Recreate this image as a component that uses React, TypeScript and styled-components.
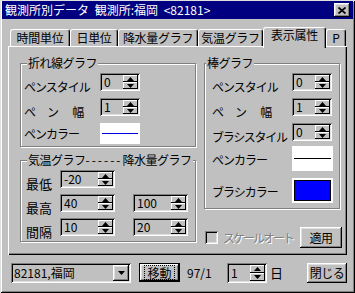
import React from "react";
import styled, { createGlobalStyle, css } from "styled-components";

const GlobalStyle = createGlobalStyle`
  html, body { margin: 0; padding: 0; background: #c0c0c0; }
  body {
    font-family: "Noto Sans CJK JP", "Noto Sans", sans-serif;
    font-size: 12px;
    color: #000;
  }
  * { box-sizing: border-box; }
`;

const raised = css`
  background: #c0c0c0;
  box-shadow: inset -1px -1px 0 #000, inset 1px 1px 0 #fff,
    inset -2px -2px 0 #808080, inset 2px 2px 0 #dfdfdf;
`;

const sunken = css`
  box-shadow: inset 1px 1px 0 #808080, inset -1px -1px 0 #fff,
    inset 2px 2px 0 #000, inset -2px -2px 0 #dfdfdf;
`;

const Window = styled.div`
  width: 355px;
  height: 293px;
  display: flex;
  flex-direction: column;
  padding: 1px 2px 2px;
  background: #c0c0c0;
  box-shadow: inset 1px 1px 0 #dfdfdf, inset -1px -1px 0 #000,
    inset 2px 2px 0 #fff, inset -2px -2px 0 #808080;
`;

const TitleBar = styled.div`
  height: 18px;
  flex: none;
  background: #000080;
  color: #fff;
  display: flex;
  align-items: center;
  justify-content: space-between;
  padding: 0 3px;
  line-height: 14px;
  white-space: pre;
  word-spacing: 3px;
`;

const CloseButton = styled.div`
  width: 16px;
  height: 14px;
  display: flex;
  align-items: center;
  justify-content: center;
  ${raised}
`;

const Client = styled.div`
  flex: 1;
  display: flex;
  flex-direction: column;
  padding: 8px 6px 0;
`;

const TabStrip = styled.div`
  height: 19px;
  display: flex;
  align-items: flex-end;
  padding-left: 2px;
`;

const Tab = styled.div<{ $w: number; $active?: boolean }>`
  width: ${(p) => p.$w}px;
  height: ${(p) => (p.$active ? 21 : 17)}px;
  margin-bottom: ${(p) => (p.$active ? -2 : 0)}px;
  position: relative;
  z-index: ${(p) => (p.$active ? 1 : 0)};
  background: #c0c0c0;
  border-top: 1px solid #fff;
  border-left: 1px solid #fff;
  border-right: 1px solid #000;
  border-radius: 3px 3px 0 0;
  box-shadow: inset -1px 0 0 #808080;
  display: flex;
  justify-content: center;
  padding-top: ${(p) => (p.$active ? 0 : 1)}px;
  line-height: 14px;
  white-space: nowrap;
  letter-spacing: -0.3px;
`;

const Panel = styled.div`
  height: 209px;
  flex: none;
  display: flex;
  gap: 8px;
  padding: 10px 5px 0 12px;
  box-shadow: inset 1px 1px 0 #fff, inset -1px -1px 0 #000,
    inset -2px -2px 0 #808080;
`;

const Column = styled.div<{ $w: number }>`
  width: ${(p) => p.$w}px;
  display: flex;
  flex-direction: column;
`;

const Group = styled.div<{ $w: number; $h: number; $mt: number }>`
  width: ${(p) => p.$w}px;
  height: ${(p) => p.$h}px;
  margin-top: ${(p) => p.$mt}px;
  border: 1px solid #808080;
  box-shadow: inset 1px 1px 0 #fff, 1px 1px 0 #fff;
  display: flex;
  flex-direction: column;
`;

const Legend = styled.div<{ $x: number }>`
  align-self: flex-start;
  height: 14px;
  line-height: 14px;
  margin: -8px 0 0 ${(p) => p.$x}px;
  padding: 0 1px;
  background: #c0c0c0;
  white-space: nowrap;
  letter-spacing: -0.5px;
`;

const Dashes = styled.span`
  letter-spacing: 2px;
`;

const Rows = styled.div<{ $pl: number }>`
  display: flex;
  flex-direction: column;
  padding: 3px 0 0 ${(p) => p.$pl}px;
`;

const Row = styled.div<{ $h?: number; $mt?: number }>`
  display: flex;
  align-items: center;
  height: ${(p) => p.$h ?? 18}px;
  margin-top: ${(p) => p.$mt ?? 0}px;
`;

const Label = styled.span<{ $w: number; $drop?: number; $size?: number; $ls?: number }>`
  width: ${(p) => p.$w}px;
  flex: none;
  font-size: ${(p) => p.$size ?? 12}px;
  line-height: 14px;
  margin-top: ${(p) => (p.$drop ?? 0) * 2}px;
  white-space: pre;
  letter-spacing: ${(p) => p.$ls ?? -1}px;
`;

const Spin = styled.div<{ $w: number; $h?: number; $ml?: number }>`
  width: ${(p) => p.$w}px;
  height: ${(p) => p.$h ?? 18}px;
  margin-left: ${(p) => p.$ml ?? 0}px;
  flex: none;
  display: flex;
  padding: 2px;
  background: #c0c0c0;
  ${sunken}
`;

const SpinValue = styled.span`
  flex: 1;
  padding-left: 2px;
  line-height: 14px;
  align-self: center;
`;

const SpinButtons = styled.div`
  width: 15px;
  display: flex;
  flex-direction: column;
`;

const SpinHalf = styled.div`
  flex: 1;
  display: flex;
  align-items: center;
  justify-content: center;
  background: #c0c0c0;
  box-shadow: inset -1px -1px 0 #000, inset 1px 1px 0 #fff;
`;

const Swatch = styled.div<{ $w: number; $h: number }>`
  width: ${(p) => p.$w}px;
  height: ${(p) => p.$h}px;
  flex: none;
  background: #fff;
  display: flex;
  align-items: center;
  padding: 0 2px;
`;

const SwatchLine = styled.div<{ $color: string }>`
  flex: 1;
  height: 1px;
  background: ${(p) => p.$color};
`;

const BrushSwatch = styled.div`
  width: 41px;
  height: 25px;
  flex: none;
  background: #fff;
  padding: 2px;
  display: flex;
`;

const BrushFill = styled.div`
  flex: 1;
  border: 1px solid #000;
  background: #0000ff;
`;

const CheckRow = styled.div`
  display: flex;
  align-items: center;
  height: 21px;
  margin-top: 18px;
`;

const CheckBox = styled.div`
  width: 13px;
  height: 13px;
  margin-left: 1px;
  background: #c0c0c0;
  ${sunken}
`;

const DisabledText = styled.span`
  margin-left: 5px;
  color: #808080;
  text-shadow: 1px 1px 0 #fff;
  letter-spacing: -2px;
  line-height: 14px;
  white-space: nowrap;
`;

const Button = styled.div<{ $w: number; $h: number; $ml?: string }>`
  width: ${(p) => p.$w}px;
  height: ${(p) => p.$h}px;
  margin-left: ${(p) => p.$ml ?? "0"};
  flex: none;
  display: flex;
  align-items: center;
  justify-content: center;
  line-height: 14px;
  letter-spacing: -0.5px;
  ${raised}
`;

const DefaultButton = styled.div`
  width: 41px;
  height: 19px;
  margin-left: 8px;
  flex: none;
  border: 1px solid #000;
  display: flex;
  align-items: center;
  justify-content: center;
  ${raised}
`;

const Focus = styled.span`
  outline: 1px dotted #000;
  outline-offset: 0;
  padding: 0 2px;
  line-height: 13px;
`;

const BottomRow = styled.div`
  display: flex;
  align-items: center;
  height: 21px;
  margin-top: 7px;
  padding-left: 3px;
`;

const Combo = styled.div`
  width: 120px;
  height: 20px;
  flex: none;
  display: flex;
  padding: 2px;
  background: #c0c0c0;
  ${sunken}
`;

const ComboText = styled.span`
  flex: 1;
  padding-left: 1px;
  line-height: 16px;
`;

const ComboButton = styled.div`
  width: 16px;
  display: flex;
  align-items: center;
  justify-content: center;
  ${raised}
`;

const Plain = styled.span<{ $w?: number; $ml?: number; $size?: number }>`
  width: ${(p) => (p.$w ? `${p.$w}px` : "auto")};
  margin-left: ${(p) => p.$ml ?? 0}px;
  font-size: ${(p) => p.$size ?? 12}px;
  line-height: 14px;
  flex: none;
`;

const Arrow = ({ up }: { up?: boolean }) => (
  <svg width="7" height="4" viewBox="0 0 7 4">
    <polygon points={up ? "0,4 7,4 3.5,0" : "0,0 7,0 3.5,4"} fill="#000" />
  </svg>
);

const SpinField = ({
  value,
  w,
  h,
  ml,
}: {
  value: string;
  w: number;
  h?: number;
  ml?: number;
}) => (
  <Spin $w={w} $h={h} $ml={ml}>
    <SpinValue>{value}</SpinValue>
    <SpinButtons>
      <SpinHalf>
        <Arrow up />
      </SpinHalf>
      <SpinHalf>
        <Arrow />
      </SpinHalf>
    </SpinButtons>
  </Spin>
);

const tabs = [
  { label: "時間単位", w: 60 },
  { label: "日単位", w: 48 },
  { label: "降水量グラフ", w: 80 },
  { label: "気温グラフ", w: 65 },
  { label: "表示属性", w: 63, active: true },
  { label: "P", w: 20 },
];

export default function App() {
  return (
    <>
      <GlobalStyle />
      <Window>
        <TitleBar>
          <span>観測所別データ 観測所:福岡 &lt;82181&gt;</span>
          <CloseButton>
            <svg width="8" height="7" viewBox="0 0 8 7">
              <path d="M0.5 0.5L7.5 6.5M7.5 0.5L0.5 6.5" stroke="#000" strokeWidth="1.7" />
            </svg>
          </CloseButton>
        </TitleBar>
        <Client>
          <TabStrip>
            {tabs.map((t) => (
              <Tab key={t.label} $w={t.w} $active={t.active}>
                {t.label}
              </Tab>
            ))}
          </TabStrip>
          <Panel>
            <Column $w={176}>
              <Group $w={176} $h={84} $mt={7}>
                <Legend $x={6}>折れ線グラフ</Legend>
                <Rows $pl={3}>
                  <Row>
                    <Label $w={76} $drop={5}>ペンスタイル</Label>
                    <SpinField value="0" w={40} />
                  </Row>
                  <Row $mt={7}>
                    <Label $w={76} $drop={5} $ls={-0.5}>ペ　ン　 幅</Label>
                    <SpinField value="1" w={40} />
                  </Row>
                  <Row $h={21} $mt={7}>
                    <Label $w={76}>ペンカラー</Label>
                    <Swatch $w={40} $h={21}>
                      <SwatchLine $color="#0000e0" />
                    </Swatch>
                  </Row>
                </Rows>
              </Group>
              <Group $w={176} $h={82} $mt={13}>
                <Legend $x={6}>
                  気温グラフ<Dashes>------</Dashes>降水量グラフ
                </Legend>
                <Rows $pl={5}>
                  <Row>
                    <Label $w={34} $drop={5} $size={13} $ls={0}>最低</Label>
                    <SpinField value="-20" w={55} />
                  </Row>
                  <Row $mt={6}>
                    <Label $w={34} $drop={5} $size={13} $ls={0}>最高</Label>
                    <SpinField value="40" w={55} />
                    <SpinField value="100" w={55} ml={18} />
                  </Row>
                  <Row $mt={6}>
                    <Label $w={34} $drop={5} $size={13} $ls={0}>間隔</Label>
                    <SpinField value="10" w={55} />
                    <SpinField value="20" w={55} ml={18} />
                  </Row>
                </Rows>
              </Group>
            </Column>
            <Column $w={138}>
              <Group $w={136} $h={146} $mt={7}>
                <Legend $x={1}>棒グラフ</Legend>
                <Rows $pl={7}>
                  <Row>
                    <Label $w={80} $drop={5}>ペンスタイル</Label>
                    <SpinField value="0" w={40} />
                  </Row>
                  <Row $mt={7}>
                    <Label $w={80} $drop={5} $ls={-0.5}>ペ　ン　 幅</Label>
                    <SpinField value="1" w={40} />
                  </Row>
                  <Row $mt={7}>
                    <Label $w={80} $drop={5} $ls={-1.3}>ブラシスタイル</Label>
                    <SpinField value="0" w={40} />
                  </Row>
                  <Row $h={25} $mt={5}>
                    <Label $w={80} $drop={1}>ペンカラー</Label>
                    <Swatch $w={41} $h={25}>
                      <SwatchLine $color="#000" />
                    </Swatch>
                  </Row>
                  <Row $h={25} $mt={7}>
                    <Label $w={80} $drop={1}>ブラシカラー</Label>
                    <BrushSwatch>
                      <BrushFill />
                    </BrushSwatch>
                  </Row>
                </Rows>
              </Group>
              <CheckRow>
                <CheckBox />
                <DisabledText>スケールオート</DisabledText>
                <Button $w={42} $h={21} $ml="auto">
                  適用
                </Button>
              </CheckRow>
            </Column>
          </Panel>
          <BottomRow>
            <Combo>
              <ComboText>82181,福岡</ComboText>
              <ComboButton>
                <Arrow />
              </ComboButton>
            </Combo>
            <DefaultButton>
              <Focus>移動</Focus>
            </DefaultButton>
            <Plain $w={40} $ml={7}>
              97/1
            </Plain>
            <SpinField value="1" w={40} h={20} />
            <Plain $ml={3} $size={13}>
              日
            </Plain>
            <Button $w={40} $h={20} $ml="auto">
              閉じる
            </Button>
          </BottomRow>
        </Client>
      </Window>
    </>
  );
}
